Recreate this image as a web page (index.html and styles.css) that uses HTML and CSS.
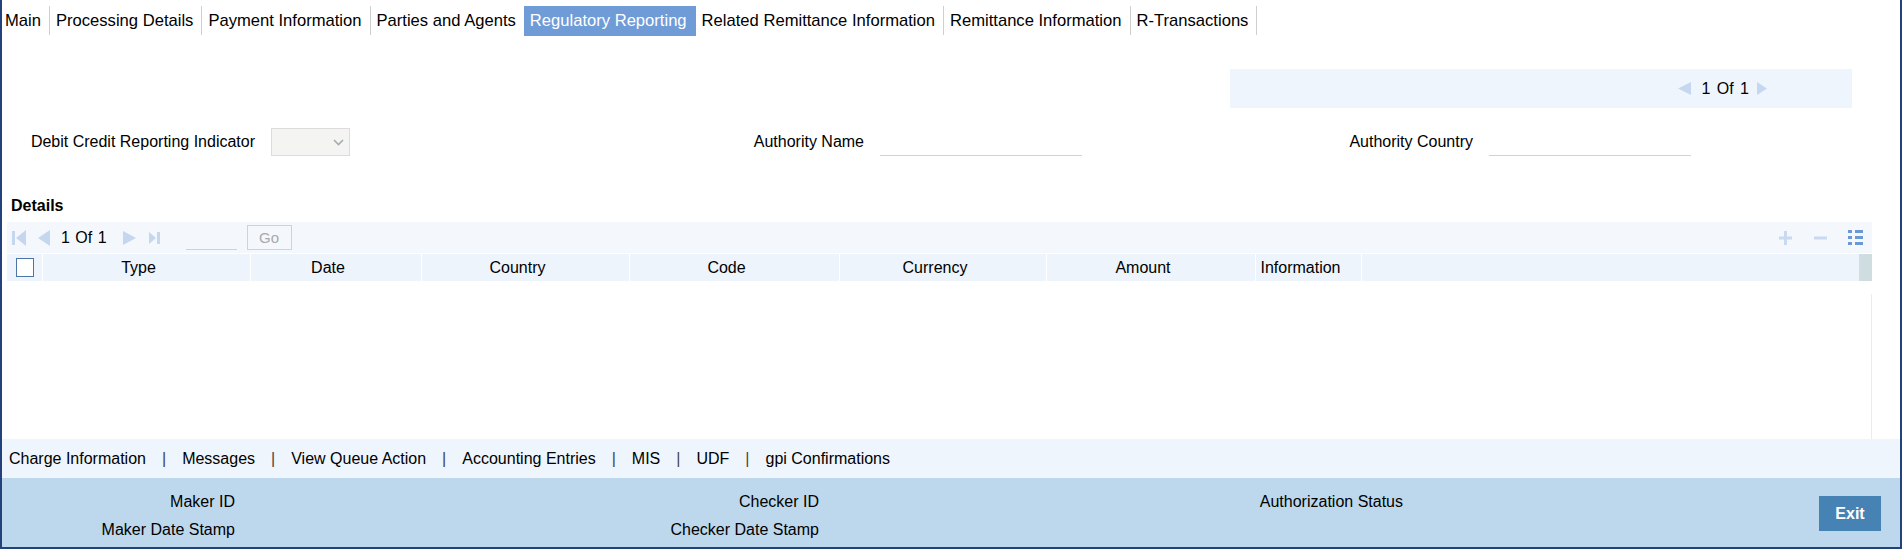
FILE: index.html
```html
<!DOCTYPE html>
<html lang="en">
<head>
  <meta charset="UTF-8">
  <title>Regulatory Reporting</title>
  <link rel="stylesheet" href="styles.css">
</head>
<body>
  <div class="frame">
    <!-- tabs -->
    <ul class="tabs">
      <li class="first">Main</li>
      <li>Processing Details</li>
      <li>Payment Information</li>
      <li>Parties and Agents</li>
      <li class="active">Regulatory Reporting</li>
      <li>Related Remittance Information</li>
      <li>Remittance Information</li>
      <li>R-Transactions</li>
    </ul>

    <!-- record pager -->
    <div class="pager-bar">
      <svg class="arr" width="13" height="13" viewBox="0 0 13 13"><polygon points="13,0 13,13 0,6.5"/></svg>
      <span class="pager-text">1 Of 1</span>
      <svg class="arr" width="10" height="13" viewBox="0 0 10 13"><polygon points="0,0 0,13 10,6.5"/></svg>
    </div>

    <!-- fields -->
    <div class="fields">
      <div class="field">
        <label>Debit Credit Reporting Indicator</label>
        <div class="select">
          <svg width="11" height="7" viewBox="0 0 11 7"><polyline points="1,1 5.5,5.5 10,1" fill="none" stroke="#a3abb3" stroke-width="1.6"/></svg>
        </div>
      </div>
      <div class="field">
        <label>Authority Name</label>
        <div class="line-input"></div>
      </div>
      <div class="field">
        <label>Authority Country</label>
        <div class="line-input"></div>
      </div>
    </div>

    <div class="section-title">Details</div>

    <!-- details grid -->
    <div class="grid">
      <div class="grid-toolbar">
        <svg class="nav first-ico" width="14" height="16" viewBox="0 0 14 16"><rect x="0" y="1" width="3" height="14"/><polygon points="14,0 14,16 4,8"/></svg>
        <svg class="nav prev-ico" width="14" height="16" viewBox="0 0 14 16"><polygon points="14,0 14,16 2,8"/></svg>
        <span class="grid-count">1 Of 1</span>
        <svg class="nav next-ico" width="14" height="14" viewBox="0 0 14 14"><polygon points="0,0 0,14 13,7"/></svg>
        <svg class="nav last-ico" width="11" height="14" viewBox="0 0 11 14"><polygon points="0,1 0,13 7,7"/><rect x="8" y="1" width="3" height="12"/></svg>
        <span class="go-input"></span>
        <span class="go-btn">Go</span>

        <svg class="tool plus" width="13" height="14" viewBox="0 0 13 14"><rect x="5" y="0" width="3" height="14"/><rect x="0" y="5.5" width="13" height="3"/></svg>
        <svg class="tool minus" width="13" height="14" viewBox="0 0 13 14"><rect x="0" y="5.5" width="13" height="3"/></svg>
        <svg class="tool list" width="15" height="15" viewBox="0 0 15 15">
          <rect x="0" y="0" width="4" height="3"/><rect x="7" y="0" width="8" height="3"/>
          <rect x="0" y="6" width="4" height="3"/><rect x="7" y="6" width="8" height="3"/>
          <rect x="0" y="12" width="4" height="3"/><rect x="7" y="12" width="8" height="3"/>
        </svg>
      </div>

      <div class="grid-head">
        <div class="cell chk-cell"><span class="chk"></span></div>
        <div class="cell">Type</div>
        <div class="cell">Date</div>
        <div class="cell">Country</div>
        <div class="cell">Code</div>
        <div class="cell">Currency</div>
        <div class="cell">Amount</div>
        <div class="cell">Information</div>
        <div class="cell filler"></div>
        <div class="scroll-cap"></div>
      </div>

      <div class="grid-body">
        <div class="grid-scroll"></div>
      </div>
    </div>

    <!-- footer links -->
    <div class="links">
      <span>Charge Information</span><span class="sep">|</span>
      <span>Messages</span><span class="sep">|</span>
      <span>View Queue Action</span><span class="sep">|</span>
      <span>Accounting Entries</span><span class="sep">|</span>
      <span>MIS</span><span class="sep">|</span>
      <span>UDF</span><span class="sep">|</span>
      <span>gpi Confirmations</span>
    </div>

    <!-- audit -->
    <div class="audit">
      <div class="audit-grid">
        <div><span class="a-label">Maker ID</span></div>
        <div><span class="a-label">Checker ID</span></div>
        <div><span class="a-label">Authorization Status</span></div>
        <div><span class="a-label">Maker Date Stamp</span></div>
        <div><span class="a-label">Checker Date Stamp</span></div>
        <div></div>
      </div>
      <button class="exit">Exit</button>
    </div>
  </div>
</body>
</html>
```

FILE: styles.css
```css
* {
  box-sizing: border-box;
}
body {
  margin: 0;
  font-family: "Liberation Sans", Arial, sans-serif;
  font-size: 16px;
  color: #000;
  background: #fff;
}
.frame {
  width: 1902px;
  height: 549px;
  border-left: 2px solid #23427c;
  border-right: 2px solid #23427c;
  border-bottom: 2px solid #23427c;
  display: flex;
  flex-direction: column;
}

/* tabs */
.tabs {
  display: flex;
  margin: 6px 0 0;
  padding: 0;
  list-style: none;
  height: 30px;
}
.tabs li {
  height: 29px;
  line-height: 29px;
  padding: 0 8px 0 6px;
  border-right: 1px solid #cfcfcf;
  font-size: 16.6px;
  white-space: nowrap;
}
.tabs li.first {
  padding-left: 3px;
}
.tabs li.active {
  height: 30px;
  line-height: 30px;
  margin-left: -1px;
  background: #6f9bd7;
  border-right-color: #6f9bd7;
  color: #fff;
}

/* top pager */
.pager-bar {
  align-self: flex-end;
  margin: 33px 48px 0 0;
  width: 622px;
  height: 39px;
  background: #eef5fd;
  display: flex;
  align-items: center;
  justify-content: flex-end;
  padding-right: 85px;
}
.pager-bar .arr {
  fill: #c6d8f0;
}
.pager-text {
  margin: 0 8px 0 10px;
  word-spacing: 2px;
}

/* fields */
.fields {
  display: grid;
  grid-template-columns: repeat(3, 609px);
  margin: 18px 0 0 13px;
  height: 32px;
}
.field {
  display: flex;
  align-items: center;
}
.field label {
  width: 256px;
  padding-right: 16px;
  text-align: right;
}
.select {
  width: 79px;
  height: 28px;
  background: #f4f4f2;
  border: 1px solid #dcdcdc;
  display: flex;
  align-items: center;
  justify-content: flex-end;
  padding-right: 5px;
}
.line-input {
  width: 202px;
  height: 28px;
  border-bottom: 1px solid #d2d2d2;
}

.section-title {
  margin-top: 38px;
  height: 20px;
  line-height: 20px;
  padding-left: 9px;
  font-weight: bold;
}

/* grid */
.grid {
  margin: 6px 28px 0 5px;
}
.grid-toolbar {
  height: 31px;
  background: #f4f8fd;
  display: flex;
  align-items: center;
  padding: 0 9px 0 5px;
}
.grid-toolbar .nav {
  fill: #c5d7ef;
}
.prev-ico {
  margin-left: 10px;
}
.grid-count {
  margin-left: 11px;
  word-spacing: 1px;
}
.next-ico {
  margin-left: 16px;
}
.last-ico {
  margin-left: 12px;
}
.go-input {
  margin: 24px 0 0 26px;
  width: 51px;
  border-bottom: 1px solid #d0d0d0;
}
.go-btn {
  margin-left: 10px;
  width: 45px;
  height: 25px;
  line-height: 23px;
  border: 1px solid #d2d2d2;
  text-align: center;
  font-size: 15px;
  color: #a9a9a9;
}
.tool.plus {
  margin-left: auto;
  fill: #c9d9f0;
}
.tool.minus {
  margin-left: 22px;
  fill: #c9d9f0;
}
.tool.list {
  margin-left: 21px;
  fill: #6b98d6;
}

.grid-head {
  display: grid;
  grid-template-columns: 36px 208px 171px 208px 210px 207px 209px 106px 1fr 13px;
  height: 28px;
  border-top: 1px solid #fff;
  background: #edf4fc;
}
.cell {
  display: flex;
  align-items: center;
  justify-content: center;
  padding: 0 18px 0 2px;
  border-right: 1px solid #fff;
  white-space: nowrap;
}
.chk-cell {
  justify-content: flex-start;
  padding: 0 0 0 9px;
}
.chk {
  flex-shrink: 0;
  width: 18px;
  height: 19px;
  background: #fff;
  border: 1px solid #4d74a8;
}
.filler {
  border-right: 0;
}
.scroll-cap {
  background: #cfdde0;
}
.grid-body {
  height: 158px;
  padding-top: 13px;
}
.grid-scroll {
  height: 145px;
  border-right: 1px solid #ebebf0;
}

/* footer links */
.links {
  height: 39px;
  background: #eef5fd;
  display: flex;
  align-items: center;
  padding-left: 7px;
  white-space: nowrap;
}
.links .sep {
  padding: 0 16px;
  color: #444;
}

/* audit */
.audit {
  height: 69px;
  background: #bdd8ed;
  display: flex;
}
.audit-grid {
  flex: 1;
  display: grid;
  grid-template-columns: repeat(3, 584px);
  grid-auto-rows: 28px;
  padding-top: 10px;
  line-height: 28px;
}
.a-label {
  display: inline-block;
  width: 233px;
  text-align: right;
}
.exit {
  margin: 18px 19px 0 0;
  width: 62px;
  height: 35px;
  border: 0;
  background: #4682b4;
  color: #fff;
  font-family: "Liberation Sans", Arial, sans-serif;
  font-size: 16px;
  font-weight: bold;
}
```
